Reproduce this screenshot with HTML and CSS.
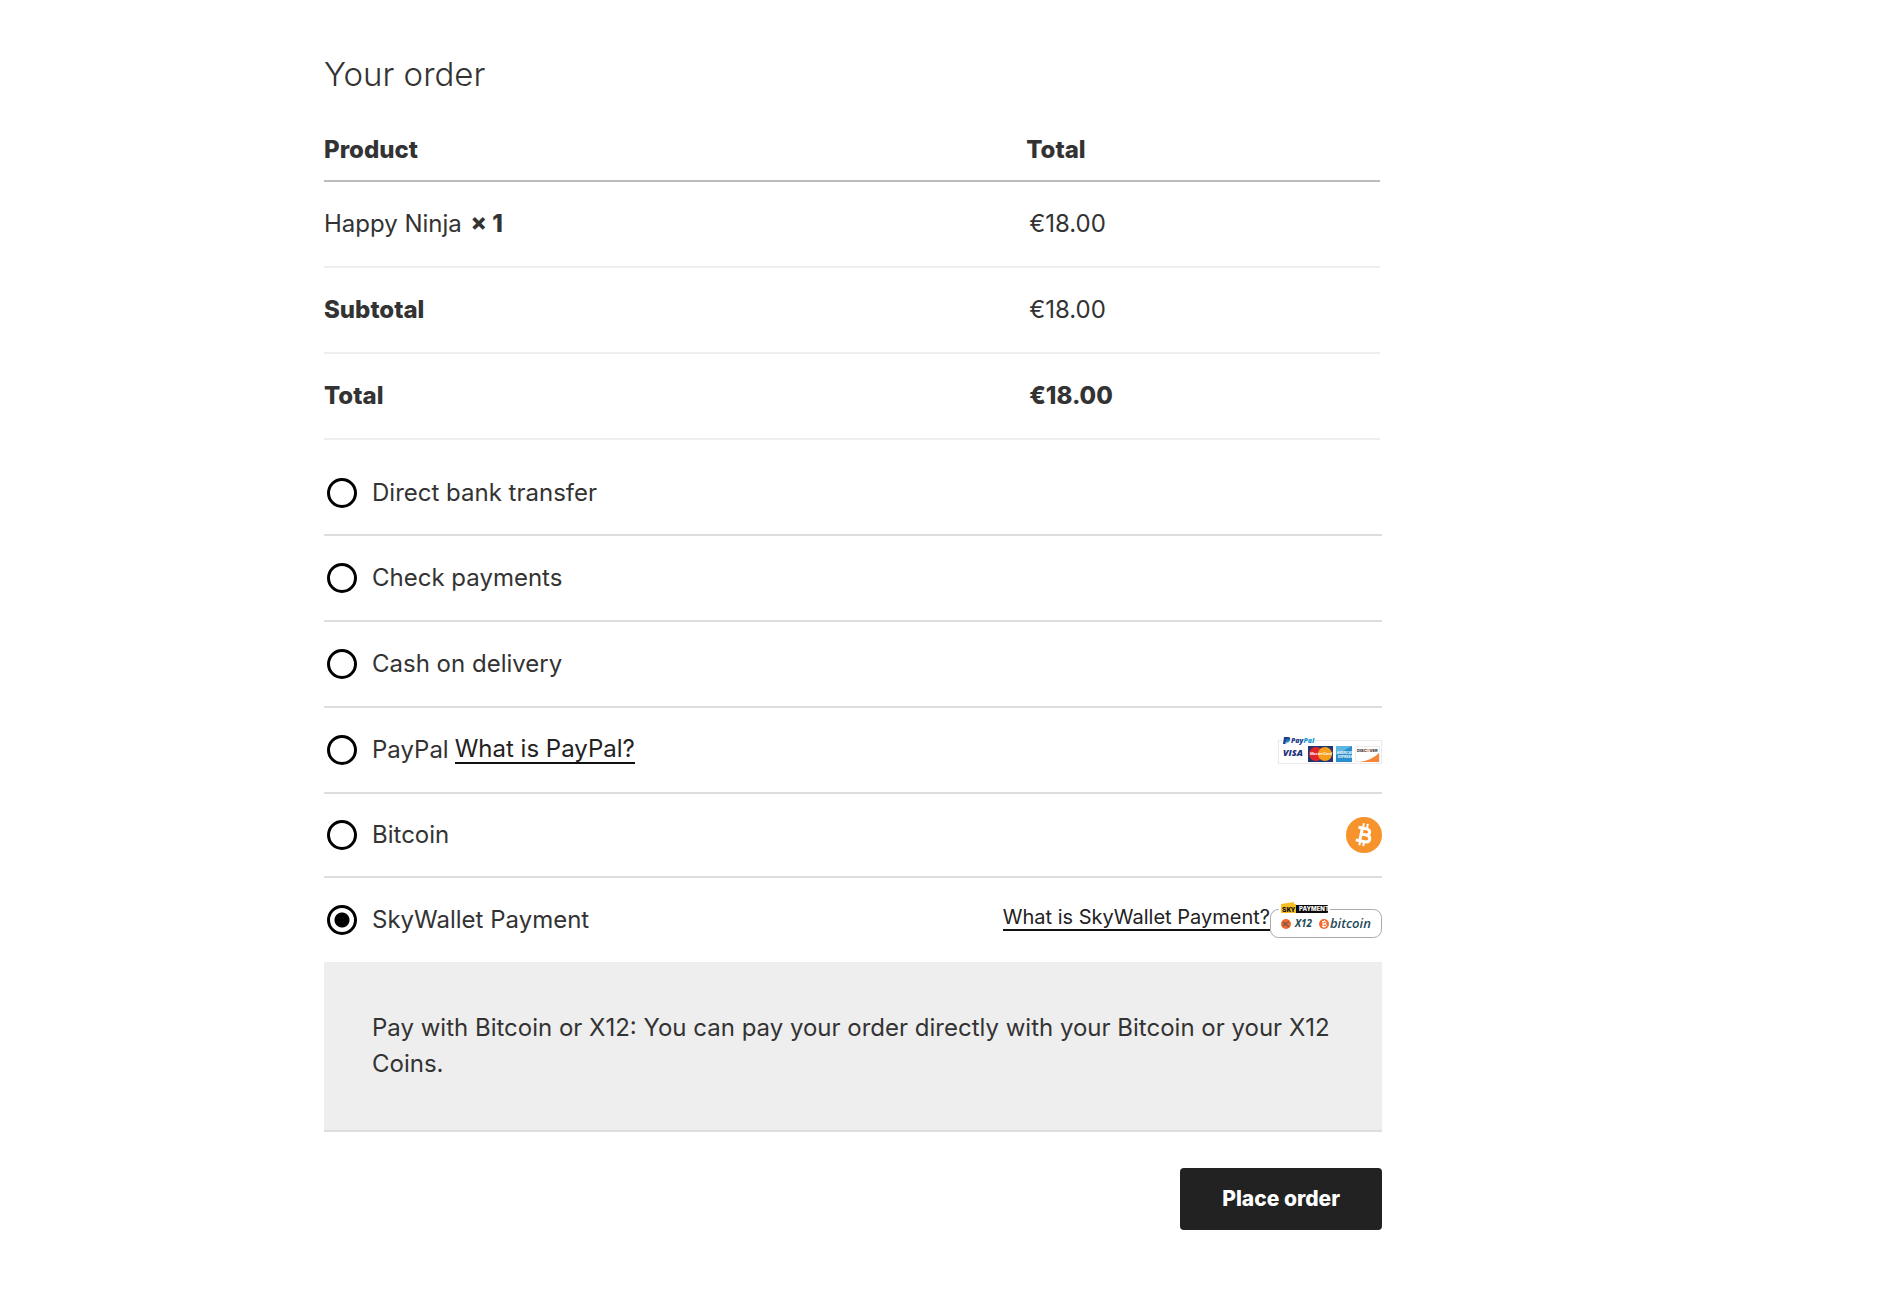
FILE: index.html
```html
<!DOCTYPE html>
<html lang="en">
<head>
<meta charset="utf-8">
<meta name="viewport" content="width=device-width, initial-scale=1">
<title>Checkout</title>
<link rel="stylesheet" href="styles.css">
</head>
<body>
<main class="page">
  <form class="checkout">
    <h1 class="title">Your order</h1>
    <table class="order">
      <thead>
        <tr><th class="item" scope="col">Product</th><th scope="col">Total</th></tr>
      </thead>
      <tbody>
        <tr><td>Happy Ninja <strong class="quantity">× 1</strong></td><td class="amount">€18.00</td></tr>
      </tbody>
      <tfoot>
        <tr><th scope="row">Subtotal</th><td class="amount">€18.00</td></tr>
        <tr><th scope="row">Total</th><td class="amount"><strong>€18.00</strong></td></tr>
      </tfoot>
    </table>

    <ul class="methods">
      <li class="method">
        <input class="radio" type="radio" name="payment" id="pay-bank">
        <label for="pay-bank">Direct bank transfer</label>
      </li>
      <li class="method method-tall">
        <input class="radio" type="radio" name="payment" id="pay-check">
        <label for="pay-check">Check payments</label>
      </li>
      <li class="method method-tall">
        <input class="radio" type="radio" name="payment" id="pay-cash">
        <label for="pay-cash">Cash on delivery</label>
      </li>
      <li class="method method-tall">
        <input class="radio" type="radio" name="payment" id="pay-paypal">
        <label for="pay-paypal">PayPal</label>
        <a class="about" href="#paypal">What is PayPal?</a>
        <svg class="logo" width="104" height="28" viewBox="0 0 104 28" role="img" aria-label="PayPal, Visa, MasterCard, American Express, Discover">
          <rect x="0.5" y="4.5" width="103" height="23" fill="#fff" stroke="#e9e9ee"/>
          <rect x="4" y="0" width="31" height="8" fill="#fff"/>
          <path d="M6 1h4q3 0 2 3-1 2-4 2l-1 2H5z" fill="#1f3f8a"/>
          <path d="M8 3h3q2 0 1 2-1 2-3 2l-1 1H7z" fill="#179bd7" opacity=".6"/>
          <text x="13" y="7" class="logo-paypal"><tspan fill="#1f3f8a">Pay</tspan><tspan fill="#179bd7">Pal</tspan></text>
          <text x="5" y="20" class="logo-visa">VISA</text>
          <rect x="30" y="10" width="25" height="16" fill="#22356f"/>
          <circle cx="38" cy="18" r="7" fill="#e0252c"/>
          <circle cx="47" cy="18" r="7" fill="#f79e1b"/>
          <text x="32" y="19" class="logo-master">MasterCard</text>
          <rect x="58" y="10" width="16" height="16" fill="#2a8fcd"/>
          <path d="M58 10h16L58 19z" fill="#5db5e2"/>
          <text x="59" y="18" class="logo-amex">AMERICAN</text>
          <text x="60" y="22" class="logo-amex">EXPRESS</text>
          <rect x="77.500" y="10.500" width="24" height="15" fill="#fff" stroke="#ececec"/>
          <path d="M101 17v9H82q12-2 19-9z" fill="#f58434"/>
          <text x="79" y="16" class="logo-discover">DISC<tspan fill="#f58434">O</tspan>VER</text>
        </svg>
      </li>
      <li class="method">
        <input class="radio" type="radio" name="payment" id="pay-bitcoin">
        <label for="pay-bitcoin">Bitcoin</label>
        <svg class="logo" width="36" height="36" viewBox="0 0 36 36" role="img" aria-label="Bitcoin">
          <circle cx="18" cy="18" r="18" fill="#f7932c"/>
          <g transform="rotate(12 18 18)" fill="none" stroke="#fff">
            <path d="M15 11v14M11 11.500h8q4 0 4 3t-4 3h-4 5q4.500 0 4.500 3.500t-4.500 3.500h-9" stroke-width="3"/>
            <path d="M15.500 6.500v4M19.500 6.500v4M15.500 25v4M19.500 25v4" stroke-width="2"/>
          </g>
        </svg>
      </li>
      <li class="method method-open">
        <input class="radio" type="radio" name="payment" id="pay-skywallet" checked>
        <label for="pay-skywallet">SkyWallet Payment</label>
        <a class="about about-end" href="#skywallet">What is SkyWallet Payment?</a>
        <svg width="112" height="36" viewBox="0 0 112 36" role="img" aria-label="Sky Payment: X12, bitcoin">
          <rect x="0.500" y="7.500" width="111" height="28" rx="8" fill="#fff" stroke="#aaa"/>
          <rect x="9" y="5" width="51" height="5" fill="#fff"/>
          <path d="M11 2l13-2v2h2v9H11z" fill="#f6bd27"/>
          <path d="M26 3h31q1 0 1 1v6q0 1-1 1H26z" fill="#0a0a0a"/>
          <text x="12" y="10" class="logo-sky">SKY</text>
          <text x="29" y="9" class="logo-payment">PAYMENT</text>
          <circle cx="16" cy="22" r="5" fill="#f26a2b"/>
          <path d="M13 20l6 5M13 24l3-3 3-1" fill="none" stroke="#6f5a50" stroke-width="1.300"/>
          <text x="25" y="25" class="logo-x12">X12</text>
          <circle cx="54" cy="22" r="5" fill="#f26a2b"/>
          <path d="M53 19v6M52 19.500h2.500q1.500 0 1.500 1.200T54.500 22H53h2q1.500 0 1.500 1.300T55 24.500h-3M54.500 18v1M54 25v1" fill="none" stroke="#fff"/>
          <text x="60" y="26" class="logo-bitcoin">bitcoin</text>
        </svg>
      </li>
    </ul>
    <p class="details">Pay with Bitcoin or X12: You can pay your order directly with your Bitcoin or your X12 Coins.</p>
    <button class="submit" type="submit">Place order</button>
  </form>
</main>
</body>
</html>
```
FILE: styles.css
```css
* {
  box-sizing: border-box;
}

body {
  margin: 0;
  background: #fff;
  color: #333;
  font-family: Inter, "Liberation Sans", sans-serif;
  font-size: 24px;
  line-height: 36px;
}

/* The column keeps its share of the window beside the empty side areas. */
.page {
  display: grid;
  grid-template-columns: 324fr minmax(0, 1058fr) 498fr;
  padding: 48px 0;
}

.checkout {
  grid-column: 2;
  display: flex;
  flex-direction: column;
}

.title {
  margin: 0 0 35px;
  font-size: 33px;
  font-weight: 300;
  line-height: 52px;
}

.order {
  width: calc(100% - 2px);
  border-collapse: collapse;
  text-align: left;
}

.order th,
.order td {
  height: 86px;
  padding: 0;
  border-bottom: 2px solid #eee;
}

.order th,
.order strong {
  font-weight: 800;
}

.order thead th {
  height: 46px;
  padding-bottom: 16px;
  border-bottom-color: #bbb;
  line-height: 28px;
}

.order .item {
  width: 66.5%;
}

.order .amount {
  padding-left: 3px;
}

.quantity {
  margin-left: 2px;
}

.methods {
  margin: 12px 0 0;
  padding: 0;
  list-style: none;
}

.method {
  display: flex;
  align-items: center;
  height: 84px;
  border-bottom: 2px solid #ddd;
}

.method-tall {
  height: 86px;
}

.method-open {
  border-bottom: 0;
}

.radio {
  appearance: none;
  width: 30px;
  height: 30px;
  margin: 0 15px 0 3px;
  border: 3px solid #000;
  border-radius: 50%;
  background: #fff;
}

.radio:checked {
  background: radial-gradient(circle, #000 7px, #fff 8px);
}

.about {
  margin-left: 6px;
  color: #222;
  line-height: 26px;
  text-decoration: none;
  border-bottom: 2px solid #111;
}

.about-end {
  margin: 0 0 4px auto;
  font-size: 20px;
  line-height: 24px;
}

.logo {
  margin-left: auto;
}

.details {
  margin: 0;
  padding: 48px;
  border-bottom: 2px solid #ddd;
  background: #eee;
}

.submit {
  align-self: flex-end;
  margin-top: 36px;
  padding: 14px 42px;
  border: 0;
  border-radius: 4px;
  background: #222;
  color: #fff;
  font: inherit;
  font-size: 21px;
  font-weight: 800;
  line-height: 34px;
}

.logo-paypal {
  font: italic 800 7px "Open Sans", sans-serif;
}

.logo-visa {
  font: italic 800 9px "Open Sans", sans-serif;
  fill: #1a2f7c;
}

.logo-master {
  font: italic 700 4px "Liberation Sans", sans-serif;
  fill: #fff;
}

.logo-amex {
  font: 700 3px "Liberation Sans", sans-serif;
  fill: #fff;
}

.logo-discover {
  font: 700 4px Inter, sans-serif;
  fill: #222;
}

.logo-sky {
  font: 900 7px Roboto, sans-serif;
  fill: #111;
}

.logo-payment {
  font: 800 6px Inter, sans-serif;
  fill: #fff;
}

.logo-x12 {
  font: italic 700 10px "Open Sans", sans-serif;
  fill: #244a57;
}

.logo-bitcoin {
  font: italic 600 13px "Open Sans", sans-serif;
  fill: #244a57;
}
```
